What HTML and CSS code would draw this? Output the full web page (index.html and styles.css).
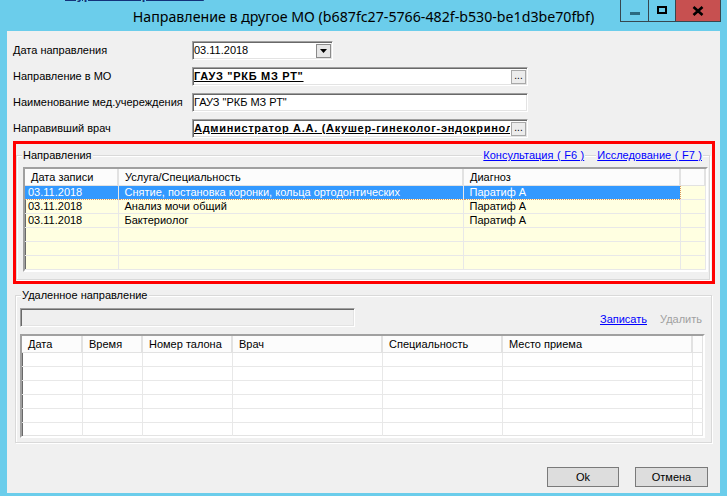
FILE: index.html
```html
<!DOCTYPE html>
<html lang="ru">
<head>
<meta charset="utf-8">
<title>Направление в другое МО</title>
<link rel="stylesheet" href="styles.css">
</head>
<body>
<div class="window">
  <span class="behind-link">Журнал направлений</span>
  <div class="titlebar">
    <div class="title">Направление в другое МО (b687fc27-5766-482f-b530-be1d3be70fbf)</div>
    <div class="caption-btns">
      <div class="cbtn cbtn-min"><span class="min-icon"></span></div>
      <div class="cbtn cbtn-max"><span class="max-icon"></span></div>
      <div class="cbtn cbtn-close">
        <svg width="12" height="10" viewBox="0 0 12 10"><path d="M1.5 1 L10.5 9 M10.5 1 L1.5 9" stroke="#000" stroke-width="2.6" fill="none"/></svg>
      </div>
    </div>
  </div>

  <div class="client">
    <div class="form">
      <div class="label">Дата направления</div>
      <div class="field field-date"><span class="ftext">03.11.2018</span><span class="dd-btn"><svg width="7" height="4" viewBox="0 0 7 4"><path d="M0 0 H7 L3.5 4 Z" fill="#000"/></svg></span></div>

      <div class="label">Направление в МО</div>
      <div class="field field-wide"><span class="ftext bold">ГАУЗ "РКБ МЗ РТ"</span><span class="ell-btn">...</span></div>

      <div class="label">Наименование мед.учереждения</div>
      <div class="field field-wide"><span class="ftext">ГАУЗ "РКБ МЗ РТ"</span></div>

      <div class="label">Направивший врач</div>
      <div class="field field-wide"><span class="ftext bold">Администратор А.А. (Акушер-гинеколог-эндокринолог)</span><span class="ell-btn">...</span></div>
    </div>

    <div class="highlight">
      <div class="group group-main">
        <div class="group-head">
          <span class="caption">Направления</span>
          <span class="head-space"></span>
          <a class="link">Консультация ( F6 )</a>
          <a class="link link-last">Исследование ( F7 )</a>
        </div>
        <div class="grid grid-main">
          <table>
            <colgroup><col style="width:93px"><col style="width:345px"><col style="width:217px"><col style="width:25px"></colgroup>
            <thead><tr><th>Дата записи</th><th>Услуга/Специальность</th><th>Диагноз</th><th></th></tr></thead>
            <tbody>
              <tr class="selected"><td>03.11.2018</td><td>Снятие, постановка коронки, кольца ортодонтических</td><td>Паратиф А</td><td></td></tr>
              <tr><td>03.11.2018</td><td>Анализ мочи общий</td><td>Паратиф А</td><td></td></tr>
              <tr><td>03.11.2018</td><td>Бактериолог</td><td>Паратиф А</td><td></td></tr>
              <tr><td></td><td></td><td></td><td></td></tr>
              <tr><td></td><td></td><td></td><td></td></tr>
              <tr><td></td><td></td><td></td><td></td></tr>
            </tbody>
          </table>
        </div>
      </div>
    </div>

    <div class="group group-removed">
      <div class="group-head">
        <span class="caption">Удаленное направление</span>
        <span class="head-space"></span>
      </div>
      <div class="removed-row">
        <div class="field field-disabled"></div>
        <span class="head-space"></span>
        <a class="link">Записать</a>
        <span class="link-disabled">Удалить</span>
      </div>
      <div class="grid grid-removed">
        <table>
          <colgroup><col style="width:60px"><col style="width:60px"><col style="width:90px"><col style="width:150px"><col style="width:120px"><col style="width:190px"><col style="width:11px"></colgroup>
          <thead><tr><th>Дата</th><th>Время</th><th>Номер талона</th><th>Врач</th><th>Специальность</th><th>Место приема</th><th></th></tr></thead>
          <tbody>
            <tr><td></td><td></td><td></td><td></td><td></td><td></td><td></td></tr>
            <tr><td></td><td></td><td></td><td></td><td></td><td></td><td></td></tr>
            <tr><td></td><td></td><td></td><td></td><td></td><td></td><td></td></tr>
            <tr><td></td><td></td><td></td><td></td><td></td><td></td><td></td></tr>
            <tr><td></td><td></td><td></td><td></td><td></td><td></td><td></td></tr>
            <tr><td></td><td></td><td></td><td></td><td></td><td></td><td></td></tr>
          </tbody>
        </table>
      </div>
    </div>

    <div class="buttons">
      <button class="btn btn-ok">Ok</button>
      <button class="btn btn-cancel">Отмена</button>
    </div>
  </div>
</div>
</body>
</html>
```

FILE: styles.css
```css
html, body {
  margin: 0;
  padding: 0;
}
body {
  width: 727px;
  height: 496px;
  overflow: hidden;
  background: #6bcdeb;
  font-family: "Liberation Sans", Arial, sans-serif;
  font-size: 11px;
  color: #000;
}
.window {
  position: relative;
  width: 727px;
  height: 496px;
  display: flex;
  flex-direction: column;
}
.behind-link {
  position: absolute;
  left: 65px;
  top: -13px;
  font-weight: bold;
  font-size: 13px;
  color: #13327a;
  text-decoration: underline;
  white-space: nowrap;
}

/* title bar */
.titlebar {
  height: 31px;
  display: grid;
  grid-template-columns: 1fr auto 1fr;
  align-items: start;
}
.title {
  grid-column: 2;
  font-family: "Noto Sans", "Open Sans", sans-serif;
  font-size: 14.2px;
  line-height: 20px;
  padding-top: 7px;
  white-space: nowrap;
  color: #000;
}
.caption-btns {
  grid-column: 3;
  justify-self: end;
  margin-right: 6px;
  display: flex;
  height: 22px;
  box-sizing: border-box;
  border: 1px solid #36474f;
  border-top: none;
}
.cbtn {
  height: 21px;
  display: flex;
  align-items: center;
  justify-content: center;
}
.cbtn-min {
  width: 27px;
  border-right: 1px solid #36474f;
}
.cbtn-max {
  width: 26px;
  border-right: 1px solid #36474f;
}
.cbtn-close {
  width: 44px;
  background: #c75050;
}
.min-icon {
  width: 10px;
  height: 3px;
  margin-top: 5px;
  background: #2b6a80;
}
.max-icon {
  width: 6px;
  height: 4px;
  border: 2px solid #000;
  margin-top: -1px;
}

/* client */
.client {
  margin: 0 7px 3px 7px;
  background: #f0f0f0;
  flex: 1;
  display: flex;
  flex-direction: column;
}

/* form */
.form {
  display: grid;
  grid-template-columns: 179px auto;
  row-gap: 7px;
  padding: 10px 0 0 6px;
  align-items: center;
}
.label {
  line-height: 19px;
  white-space: nowrap;
}
.field {
  height: 19px;
  box-sizing: border-box;
  background: #fff;
  border: 1px solid;
  border-color: #a0a0a0 #ffffff #ffffff #a0a0a0;
  box-shadow: inset 1px 1px 0 #696969, inset -1px -1px 0 #e3e3e3;
  display: flex;
  align-items: center;
  padding: 0 2px 0 1px;
  overflow: hidden;
}
.field-date {
  width: 141px;
}
.field-wide {
  width: 336px;
}
.ftext {
  white-space: nowrap;
  overflow: hidden;
  flex: 1;
  min-width: 0;
  line-height: 15px;
}
.bold {
  font-weight: bold;
  text-decoration: underline;
  letter-spacing: 0.7px;
}
.dd-btn {
  width: 15px;
  height: 14px;
  box-sizing: border-box;
  border: 1px solid #8a8a8a;
  background: #e6e6e6;
  display: flex;
  align-items: center;
  justify-content: center;
  margin-right: -1px;
}
.ell-btn {
  width: 15px;
  height: 14px;
  box-sizing: border-box;
  border: 1px solid #a8a8a8;
  background: #ececec;
  font-size: 10px;
  line-height: 9px;
  text-align: center;
  color: #000;
  margin-left: 1px;
  margin-right: -1px;
  flex: none;
}

/* highlight */
.highlight {
  margin: 3px 5px 0 6px;
  border: 3px solid #ff0000;
  height: 143px;
  box-sizing: border-box;
  display: flex;
  flex-direction: column;
}

/* group box */
.group {
  border: 1px solid #d9d9d9;
  box-shadow: inset 1px 1px 0 #ffffff, 1px 1px 0 #ffffff;
  display: flex;
  flex-direction: column;
}
.group-main {
  margin: 11px 2px 0 0;
}
.group-removed {
  margin: 11px 8px 0 8px;
}
.group-head {
  display: flex;
  align-items: center;
  height: 13px;
  margin-top: -7px;
}
.caption {
  background: #f0f0f0;
  padding: 0 1px;
  margin-left: 5px;
  line-height: 13px;
  white-space: nowrap;
}
.head-space {
  flex: 1;
}
.link {
  color: #0000ff;
  text-decoration: underline;
  background: #f0f0f0;
  line-height: 13px;
  white-space: nowrap;
  padding: 0 1px;
}
.group-head .link {
  margin-left: 10px;
  word-spacing: 0.5px;
}
.group-head .link-last {
  margin-right: 6px;
  margin-left: 11px;
}
.link-disabled {
  color: #a0a0a0;
  margin-left: 12px;
  margin-right: 9px;
  line-height: 13px;
}

/* grids */
.grid {
  box-sizing: border-box;
  border: 2px solid;
  border-color: #a0a0a0 #ffffff #ffffff #a0a0a0;
  box-shadow: inset 1px 1px 0 #696969, inset -1px -1px 0 #e3e3e3;
  overflow: hidden;
}
.grid-main {
  margin: 5px 1px 7px 6px;
  height: 105px;
  background: #ffffe1;
}
.grid-removed {
  margin: 7px 6px 4px 4px;
  height: 104px;
  background: #ffffff;
}
.grid table {
  table-layout: fixed;
  border-collapse: collapse;
  border-spacing: 0;
  width: 100%;
}
.grid th {
  height: 16px;
  padding: 0 0 0 6px;
  text-align: left;
  font-weight: normal;
  background: #fcfcfc;
  border-right: 2px solid #e2e2e2;
  border-bottom: 1px solid #e2e2e2;
  white-space: nowrap;
  overflow: hidden;
  line-height: 16px;
}
.grid td {
  height: 13px;
  padding: 0 0 0 3px;
  line-height: 13px;
  border-right: 1px solid #e8e8e8;
  border-bottom: 1px solid #e8e8e8;
  white-space: nowrap;
  overflow: hidden;
}
.grid-main td:nth-child(2),
.grid-main td:nth-child(3) {
  padding-left: 6px;
}
.grid-main tr.selected td:not(:last-child) {
  background: #3399ff;
  color: #fff;
  border-top: 1px dotted #d9955a;
  border-bottom: 1px dotted #d9955a;
}
.grid-main tr.selected td:nth-child(3) {
  border-right: 1px dotted #d9955a;
}

/* removed row */
.removed-row {
  display: flex;
  align-items: flex-end;
  margin: 6px 0 0 4px;
}
.field-disabled {
  width: 335px;
  background: #efefef;
  flex: none;
}
.removed-row .link {
  margin-bottom: 1px;
  background: none;
}
.removed-row .link-disabled {
  margin-bottom: 1px;
}

/* buttons */
.buttons {
  display: flex;
  justify-content: flex-end;
  gap: 16px;
  margin: 24px 12px 0 0;
}
.btn {
  height: 20px;
  box-sizing: border-box;
  border: 1px solid #7a7a7a;
  background: #dddddd;
  font-family: "Liberation Sans", Arial, sans-serif;
  font-size: 11px;
  padding: 0;
  color: #000;
}
.btn-ok {
  width: 72px;
}
.btn-cancel {
  width: 73px;
}
```
